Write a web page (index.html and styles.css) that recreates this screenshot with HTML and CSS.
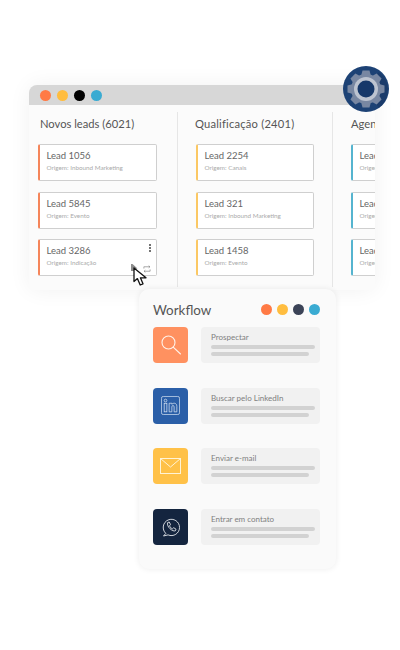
FILE: index.html
```html
<!DOCTYPE html>
<html lang="en">
<head>
    <meta charset="UTF-8">
    <meta name="viewport" content="width=device-width, initial-scale=1">
    <title>Workflow</title>
    <link rel="stylesheet" href="styles.css">
</head>
<body>
    <div class="board">
        <div class="titlebar">
            <span class="dot orange"></span>
            <span class="dot yellow"></span>
            <span class="dot black"></span>
            <span class="dot blue"></span>
        </div>
        <div class="columns">
            <div class="column first">
                <h2>Novos leads (6021)</h2>
                <div class="lead orange-edge">
                    <p class="name">Lead 1056</p>
                    <p class="origin">Origem: Inbound Marketing</p>
                </div>
                <div class="lead orange-edge">
                    <p class="name">Lead 5845</p>
                    <p class="origin">Origem: Evento</p>
                </div>
                <div class="lead orange-edge">
                    <p class="name">Lead 3286</p>
                    <p class="origin">Origem: Indicação</p>
                    <span class="kebab"><i></i><i></i><i></i></span>
                    <svg class="tool-play" width="7" height="7" viewBox="0 0 7 7"><path d="M0 0H1.5L6.5 4.5 4 5 3 7H0Z" fill="#8c8c8c"/></svg>
                    <svg class="tool-swap" width="8" height="8" viewBox="0 0 9 9" fill="none" stroke="#777" stroke-width="0.7"><path d="M1 4V2H7.6M6.4 0.8L7.8 2 6.4 3.2M8 5V7H1.4M2.6 5.8L1.2 7 2.6 8.2"/></svg>
                </div>
            </div>
            <div class="column middle">
                <h2>Qualificação (2401)</h2>
                <div class="lead yellow-edge">
                    <p class="name">Lead 2254</p>
                    <p class="origin">Origem: Canais</p>
                </div>
                <div class="lead yellow-edge">
                    <p class="name">Lead 321</p>
                    <p class="origin">Origem: Inbound Marketing</p>
                </div>
                <div class="lead yellow-edge">
                    <p class="name">Lead 1458</p>
                    <p class="origin">Origem: Evento</p>
                </div>
            </div>
            <div class="column last">
                <h2>Agend</h2>
                <div class="lead blue-edge">
                    <p class="name">Lead</p>
                    <p class="origin">Origem</p>
                </div>
                <div class="lead blue-edge">
                    <p class="name">Lead</p>
                    <p class="origin">Origem</p>
                </div>
                <div class="lead blue-edge">
                    <p class="name">Lead</p>
                    <p class="origin">Origem</p>
                </div>
            </div>
        </div>
    </div>

    <svg class="gear" width="46" height="46" viewBox="0 0 46 46">
        <circle cx="23" cy="23" r="23" fill="#1d4275"/>
        <path d="M23 23L36 6A23 23 0 0 1 36 42Z" fill="#173663" opacity="0.55"/>
        <g fill="#7887a2">
            <circle cx="23" cy="23" r="15"/>
            <path d="M19.5 4.5H26.5L28.5 12H17.5Z"/>
            <path d="M19.5 4.5H26.5L28.5 12H17.5Z" transform="rotate(45 23 23)"/>
            <path d="M19.5 4.5H26.5L28.5 12H17.5Z" transform="rotate(90 23 23)"/>
            <path d="M19.5 4.5H26.5L28.5 12H17.5Z" transform="rotate(135 23 23)"/>
            <path d="M19.5 4.5H26.5L28.5 12H17.5Z" transform="rotate(180 23 23)"/>
            <path d="M19.5 4.5H26.5L28.5 12H17.5Z" transform="rotate(225 23 23)"/>
            <path d="M19.5 4.5H26.5L28.5 12H17.5Z" transform="rotate(270 23 23)"/>
            <path d="M19.5 4.5H26.5L28.5 12H17.5Z" transform="rotate(315 23 23)"/>
        </g>
        <circle cx="23" cy="23" r="12" fill="#bcc3d0"/>
        <circle cx="23" cy="23" r="8.5" fill="#16386a"/>
    </svg>

    <svg class="cursor" width="15" height="20" viewBox="0 0 15 20">
        <path d="M1 1V14.5L4.4 11.6 7.2 18 10 16.8 7.4 10.8H13Z" fill="#fff" stroke="#111" stroke-width="1.3" stroke-linejoin="round"/>
    </svg>

    <div class="workflow">
        <div class="workflow-head">
            <h1>Workflow</h1>
            <div class="dots">
                <span class="dot orange"></span>
                <span class="dot yellow"></span>
                <span class="dot navy"></span>
                <span class="dot blue"></span>
            </div>
        </div>
        <div class="step">
            <div class="step-icon bg-orange">
                <svg width="22" height="22" viewBox="0 0 22 22" fill="none" stroke="#fff3ea" stroke-width="1.1" stroke-linecap="round"><circle cx="8.5" cy="8.5" r="6.5"/><path d="M13.2 13.2L20.5 20"/></svg>
            </div>
            <div class="step-body">
                <p>Prospectar</p>
                <div class="bar"></div>
                <div class="bar short"></div>
            </div>
        </div>
        <div class="step">
            <div class="step-icon bg-linkedin">
                <svg width="19" height="19" viewBox="0 0 21 21" fill="none" stroke="#dbe6f4" stroke-width="0.8"><rect x="0.5" y="0.5" width="20" height="20" rx="2"/><circle cx="5" cy="5" r="1.5"/><rect x="3.5" y="8" width="3" height="9.5"/><path d="M9 8H12V9.2C13.4 7.4 17.5 7.2 17.5 11.5V17.5H14.5V12C14.5 10 12 10 12 12V17.5H9Z"/></svg>
            </div>
            <div class="step-body">
                <p>Buscar pelo LinkedIn</p>
                <div class="bar"></div>
                <div class="bar short"></div>
            </div>
        </div>
        <div class="step">
            <div class="step-icon bg-yellow">
                <svg width="21" height="16" viewBox="0 0 21 16" fill="none" stroke="#fff3d6" stroke-width="1"><rect x="0.5" y="0.5" width="20" height="15"/><path d="M0.5 0.5L10.5 9 20.5 0.5"/></svg>
            </div>
            <div class="step-body">
                <p>Enviar e-mail</p>
                <div class="bar"></div>
                <div class="bar short"></div>
            </div>
        </div>
        <div class="step">
            <div class="step-icon bg-navy">
                <svg width="18" height="19" viewBox="0 0 19 20" fill="none" stroke="#eef1f5" stroke-width="0.9" stroke-linejoin="round"><path d="M4 16.2A8.6 8.6 0 1 1 6.4 17.8L1.6 19Z"/><path d="M6 4.8L7.6 4.2 9 6.8 8 8.2C8.4 9.6 9.6 10.8 11 11.4L12.4 10.2 14.8 11.8 14.2 13.4C11.4 15 4.4 9 6 4.8Z"/></svg>
            </div>
            <div class="step-body">
                <p>Entrar em contato</p>
                <div class="bar"></div>
                <div class="bar short"></div>
            </div>
        </div>
    </div>
</body>
</html>
```

FILE: styles.css
```css
* {
    margin: 0;
    padding: 0;
    box-sizing: border-box;
}

body {
    font-family: 'Lato', sans-serif;
    background-color: #fff;
    position: relative;
    height: 650px;
    overflow: hidden;
    padding-top: 85px;
}

.dot {
    display: block;
    flex: none;
    width: 11px;
    height: 11px;
    border-radius: 50%;
}

.orange { background-color: #ff7a45; }
.yellow { background-color: #ffbd3f; }
.black { background-color: #000; }
.blue { background-color: #3aabd2; }
.navy { background-color: #3b4357; }

/* Kanban window */
.board {
    width: 346px;
    height: 205px;
    margin-left: 29px;
    background: #fbfbfb;
    border-radius: 8px 8px 6px 6px;
    box-shadow: 0 0 22px rgba(0, 0, 0, 0.06);
    overflow: hidden;
}

.titlebar {
    display: flex;
    align-items: center;
    gap: 6px;
    height: 20px;
    padding-left: 11px;
    background: #d7d7d7;
}

.columns {
    display: flex;
    height: 182px;
    padding-top: 7px;
}

.column {
    flex: none;
    padding-left: 18.5px;
    border-right: 1px solid #e6e6e6;
}

.column.first {
    width: 148.5px;
    padding-left: 9px;
}

.column.first h2 {
    margin-left: 2px;
}

.column.middle {
    width: 155px;
}

.column.middle h2 {
    margin-left: -1px;
    letter-spacing: 0.2px;
}

.column.middle .lead {
    width: 117.5px;
}

.column.last {
    width: 120px;
    border-right: none;
}

.column h2 {
    font-size: 11.2px;
    font-weight: 400;
    line-height: 16px;
    margin: 3.5px 0 12.5px 0;
    color: #555;
    white-space: nowrap;
}

.lead {
    position: relative;
    width: 119px;
    height: 37px;
    margin-bottom: 10.5px;
    padding: 4px 0 0 6.5px;
    background: #fff;
    border: 1px solid #cfcfcf;
    border-left-width: 2px;
    border-radius: 2px;
}

.orange-edge { border-left-color: #f5855a; }
.yellow-edge { border-left-color: #fbc864; }
.blue-edge { border-left-color: #55b4cf; }

.name {
    font-size: 9.5px;
    line-height: 14px;
    color: #666;
    white-space: nowrap;
}

.origin {
    font-size: 6.3px;
    line-height: 11px;
    margin-top: -1px;
    color: #aaa;
    white-space: nowrap;
}

.kebab {
    position: absolute;
    top: 4px;
    right: 5px;
    display: flex;
    flex-direction: column;
    gap: 1px;
}

.kebab i {
    display: block;
    width: 2px;
    height: 2px;
    background: #444;
    border-radius: 50%;
}

.tool-play {
    position: absolute;
    top: 24px;
    left: 90.5px;
}

.tool-swap {
    position: absolute;
    top: 25px;
    left: 102.5px;
}

/* things lying over the window */
.gear {
    position: absolute;
    top: 66px;
    left: 343px;
}

.cursor {
    position: absolute;
    top: 267px;
    left: 132.5px;
    z-index: 2;
}

/* Workflow card */
.workflow {
    position: relative;
    width: 197px;
    height: 280.5px;
    margin: -1.5px 0 0 139px;
    padding: 12px 16px 0 14px;
    background: #fafafa;
    border-radius: 10px;
    box-shadow: 0 0 6px rgba(0, 0, 0, 0.08);
}

.workflow-head {
    display: flex;
    justify-content: space-between;
    align-items: center;
    height: 18px;
    margin-bottom: 8.5px;
}

.workflow-head h1 {
    font-size: 13.4px;
    font-weight: 400;
    color: #555;
}

.dots {
    display: flex;
    gap: 5px;
}

.step {
    display: flex;
    gap: 12.5px;
    margin-bottom: 24.7px;
}

.step-icon {
    flex: none;
    width: 35px;
    height: 36px;
    display: flex;
    justify-content: center;
    align-items: center;
    border-radius: 4px;
}

.bg-orange { background-color: #ff9160; }
.bg-linkedin { background-color: #2b5fa8; }
.bg-yellow { background-color: #ffc148; }
.bg-navy { background-color: #14253f; }

.step-body {
    flex: 1;
    height: 36px;
    padding: 5px 5px 0 10.5px;
    background: #f1f1f1;
    border-radius: 4px;
}

.step-body p {
    font-size: 8px;
    line-height: 10px;
    margin-bottom: 3px;
    color: #808080;
    white-space: nowrap;
}

.bar {
    height: 4px;
    margin-bottom: 3px;
    background: #d2d2d2;
    border-radius: 2px;
}

.bar.short {
    width: 94%;
}
```
